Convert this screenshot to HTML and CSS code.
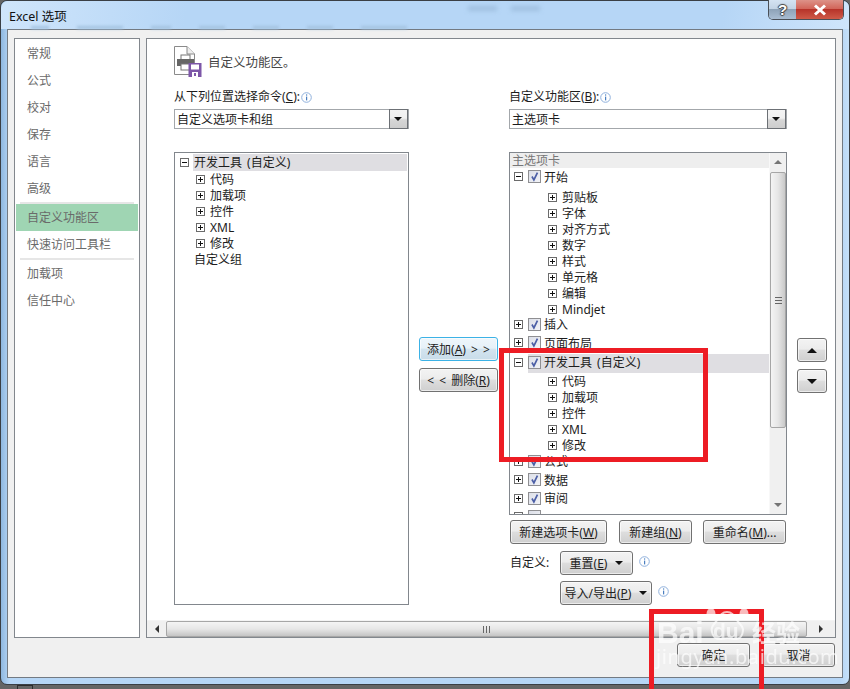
FILE: index.html
```html
<!DOCTYPE html>
<html lang="zh-CN">
<head>
    <meta charset="UTF-8">
    <title>Excel 选项</title>
    <link rel="stylesheet" href="styles.css">
</head>
<body>
<svg class="defs" width="0" height="0">
    <symbol id="info" viewBox="0 0 11 11">
        <circle cx="5.5" cy="5.5" r="4.8" fill="#fff" stroke="#8fb0dc"/>
        <rect x="5" y="2.4" width="1.2" height="1.2" fill="#4a7fc0"/>
        <rect x="5" y="4.6" width="1.2" height="3.8" fill="#4a7fc0"/>
    </symbol>
    <symbol id="tick" viewBox="0 0 13 13">
        <path d="M3.5 6.5 L5.8 10.5 L10 2" fill="none" stroke="#4c5fa6" stroke-width="2"/>
    </symbol>
</svg>

<div class="window">
    <div class="titlebar">
        <span class="title">Excel 选项</span>
        <div class="ghosts">
            <i></i><i class="g2"></i><i class="g3"></i><i class="g4"></i><i class="g4"></i><i class="g4"></i><i class="g2"></i>
        </div>
        <div class="ghosts-top"><i></i><i></i></div>
        <div class="caption">
            <span class="cap-help">?</span>
            <span class="cap-close">
                <svg width="14" height="12" viewBox="0 0 14 12"><path d="M2 1.5 L12 10.5 M12 1.5 L2 10.5" stroke="#fff" stroke-width="3"/></svg>
            </span>
        </div>
    </div>

    <div class="client">
        <div class="panels">
            <div class="nav">
                <div class="nav-item">常规</div>
                <div class="nav-item">公式</div>
                <div class="nav-item">校对</div>
                <div class="nav-item">保存</div>
                <div class="nav-item">语言</div>
                <div class="nav-item">高级</div>
                <div class="nav-sep"></div>
                <div class="nav-item selected">自定义功能区</div>
                <div class="nav-item">快速访问工具栏</div>
                <div class="nav-sep"></div>
                <div class="nav-item">加载项</div>
                <div class="nav-item">信任中心</div>
            </div>

            <div class="main">
                <div class="heading">
                    <svg width="30" height="31" viewBox="0 0 30 31">
                        <path d="M0.5 0.5 H13 L20.5 8 V28.5 H0.5 Z" fill="#fff" stroke="#8a8a8a"/>
                        <path d="M13 0.5 V8 H20.5" fill="#eee" stroke="#8a8a8a"/>
                        <rect x="7" y="9" width="9" height="5" fill="#fff" stroke="#777"/>
                        <rect x="3" y="13" width="17" height="7" fill="#666"/>
                        <rect x="7" y="18" width="9" height="6" fill="#fff" stroke="#777"/>
                        <rect x="14.5" y="17" width="13" height="14" fill="#7d57a8"/>
                        <rect x="17" y="18.5" width="8" height="5" fill="#fff"/>
                        <rect x="18" y="26" width="6" height="5" fill="#fff"/>
                        <rect x="20" y="27" width="2" height="3" fill="#7d57a8"/>
                    </svg>
                    <span>自定义功能区。</span>
                </div>

                <div class="columns">
                    <div class="col">
                        <div class="label"><span>从下列位置选择命令(<u>C</u>):</span><svg class="info"><use href="#info"/></svg></div>
                        <div class="select"><span>自定义选项卡和组</span><b class="drop"></b></div>
                        <div class="list list-left">
                            <div class="tree">
                                <div class="row row-first"><b class="exp open"></b><span class="hl">开发工具 (自定义)</span></div>
                                <div class="row child"><b class="exp"></b><span>代码</span></div>
                                <div class="row child"><b class="exp"></b><span>加载项</span></div>
                                <div class="row child"><b class="exp"></b><span>控件</span></div>
                                <div class="row child"><b class="exp"></b><span>XML</span></div>
                                <div class="row child"><b class="exp"></b><span>修改</span></div>
                                <div class="row plain">自定义组</div>
                            </div>
                        </div>
                    </div>

                    <div class="col-mid">
                        <button class="btn btn-default"><span>添加(<u>A</u>) &gt; &gt;</span></button>
                        <button class="btn"><span>&lt; &lt; 删除(<u>R</u>)</span></button>
                    </div>

                    <div class="col">
                        <div class="label"><span>自定义功能区(<u>B</u>):</span><svg class="info"><use href="#info"/></svg></div>
                        <div class="select"><span>主选项卡</span><b class="drop"></b></div>
                        <div class="list list-right">
                            <div class="ribbon">
                                <div class="ribbon-head">主选项卡</div>
                                <div class="top top-start"><b class="exp open"></b><span class="chk"><svg><use href="#tick"/></svg></span><span>开始</span></div>
                                <div class="group group-start">
                                    <div class="row sub"><b class="exp"></b><span>剪贴板</span></div>
                                    <div class="row sub"><b class="exp"></b><span>字体</span></div>
                                    <div class="row sub"><b class="exp"></b><span>对齐方式</span></div>
                                    <div class="row sub"><b class="exp"></b><span>数字</span></div>
                                    <div class="row sub"><b class="exp"></b><span>样式</span></div>
                                    <div class="row sub"><b class="exp"></b><span>单元格</span></div>
                                    <div class="row sub"><b class="exp"></b><span>编辑</span></div>
                                    <div class="row sub"><b class="exp"></b><span>Mindjet</span></div>
                                </div>
                                <div class="top"><b class="exp"></b><span class="chk"><svg><use href="#tick"/></svg></span><span>插入</span></div>
                                <div class="top"><b class="exp"></b><span class="chk"><svg><use href="#tick"/></svg></span><span>页面布局</span></div>
                                <div class="top top-dev"><b class="exp open"></b><span class="hl-dev"><span class="chk"><svg><use href="#tick"/></svg></span><span>开发工具 (自定义)</span></span></div>
                                <div class="group group-dev">
                                    <div class="row sub"><b class="exp"></b><span>代码</span></div>
                                    <div class="row sub"><b class="exp"></b><span>加载项</span></div>
                                    <div class="row sub"><b class="exp"></b><span>控件</span></div>
                                    <div class="row sub"><b class="exp"></b><span>XML</span></div>
                                    <div class="row sub"><b class="exp"></b><span>修改</span></div>
                                </div>
                                <div class="top"><b class="exp"></b><span class="chk"><svg><use href="#tick"/></svg></span><span>公式</span></div>
                                <div class="top"><b class="exp"></b><span class="chk"><svg><use href="#tick"/></svg></span><span>数据</span></div>
                                <div class="top"><b class="exp"></b><span class="chk"><svg><use href="#tick"/></svg></span><span>审阅</span></div>
                                <div class="top"><b class="exp"></b><span class="chk"></span></div>
                            </div>
                            <div class="vscroll">
                                <div class="arrow-box"><b class="tri-up small"></b></div>
                                <div class="vthumb"><i></i></div>
                                <div class="arrow-box end"><b class="tri-down small"></b></div>
                            </div>
                        </div>
                        <div class="btn-row">
                            <button class="btn w-tab"><span>新建选项卡(<u>W</u>)</span></button>
                            <button class="btn w-group"><span>新建组(<u>N</u>)</span></button>
                            <button class="btn w-rename"><span>重命名(<u>M</u>)...</span></button>
                        </div>
                        <div class="custom-row">
                            <span class="custom-label">自定义:</span>
                            <button class="btn w-reset"><span>重置(<u>E</u>)</span><b class="tri-down"></b></button>
                            <svg class="info"><use href="#info"/></svg>
                        </div>
                        <div class="custom-row second">
                            <button class="btn w-import"><span>导入/导出(<u>P</u>)</span><b class="tri-down"></b></button>
                            <svg class="info"><use href="#info"/></svg>
                        </div>
                    </div>

                    <div class="col-move">
                        <button class="btn btn-move"><b class="tri-up"></b></button>
                        <button class="btn btn-move"><b class="tri-down"></b></button>
                    </div>
                </div>

                <div class="hscroll">
                    <div class="harrow"><b class="tri-left"></b></div>
                    <div class="hthumb"><i></i></div>
                    <div class="harrow"><b class="tri-right"></b></div>
                </div>
            </div>
        </div>

        <div class="footer">
            <button class="btn btn-foot">确定</button>
            <button class="btn btn-foot">取消</button>
        </div>
    </div>
</div>

<!-- bit of the sheet behind the dialog -->
<div class="behind"></div>

<!-- annotations drawn on top of the screenshot -->
<div class="mark mark-tree"></div>
<div class="mark mark-ok"></div>

<div class="watermark">
    <svg class="paw" width="46" height="44" viewBox="0 0 46 44">
        <ellipse cx="7" cy="17" rx="4.5" ry="6"/>
        <ellipse cx="17" cy="6" rx="4.5" ry="6"/>
        <ellipse cx="30" cy="6" rx="4.5" ry="6"/>
        <ellipse cx="40" cy="17" rx="4.5" ry="6"/>
        <path class="paw-body" d="M23 15 C16 15 15 22 10 27 C5 33 9 43 17 42 C21 41 26 41 30 42 C38 43 42 33 36 27 C31 22 30 15 23 15 Z"/>
    </svg>
    <span class="wm-bai">Bai</span>
    <span class="wm-du">du</span>
    <span class="wm-jy">经验</span>
    <span class="wm-url">jingyan.baidu.com</span>
</div>
</body>
</html>
```

FILE: styles.css
```css
* {
    box-sizing: border-box;
}
html, body {
    margin: 0;
    height: 689px;
    overflow: hidden;
}
body {
    background: #656565;
    font-family: "Noto Sans", "Noto Sans CJK SC", sans-serif;
    font-size: 12px;
    color: #1c1c1c;
    position: relative;
}
.defs {
    position: absolute;
}
svg {
    display: block;
}
b, i {
    display: block;
}

/* window frame */
.window {
    width: 850px;
    height: 685px;
    border: 1px solid #3a3f45;
    border-radius: 7px;
    background: linear-gradient(90deg, #8fb8e0 0, #b6d6f6 1%, #b6d6f6 99%, #c6e0f8 100%);
    padding: 0 6px 6px 6px;
    display: flex;
    flex-direction: column;
}
.titlebar {
    height: 28px;
    margin: 0 -6px;
    padding-left: 8px;
    display: flex;
    align-items: center;
    position: relative;
    background: linear-gradient(100deg, #cfe5fb 0, #b6d6f6 22%, #b6d6f6 85%, #cfe5fb 100%);
    border-radius: 7px 7px 0 0;
}
.title {
    font-size: 12.5px;
    color: #111;
}
.ghosts {
    position: absolute;
    left: 30px;
    top: 25px;
    display: flex;
    gap: 28px;
    filter: blur(1.5px);
}
.ghosts i {
    width: 18px;
    height: 3px;
    background: #a3c2df;
}
.ghosts .g2 {
    width: 46px;
}
.ghosts .g3 {
    width: 20px;
}
.ghosts .g4 {
    width: 26px;
}
.ghosts-top {
    position: absolute;
    left: 467px;
    top: 5px;
    display: flex;
    gap: 14px;
    filter: blur(2px);
}
.ghosts-top i {
    width: 29px;
    height: 5px;
    background: #a0c0e0;
}
.caption {
    position: absolute;
    right: 5px;
    top: -1px;
    height: 20px;
    display: flex;
    border: 1px solid #4a5058;
    border-top: 0;
    border-radius: 0 0 5px 5px;
    overflow: hidden;
}
.cap-help {
    width: 27px;
    background: linear-gradient(#d4e3f2 0, #c3d4e5 45%, #8ea3b8 50%, #a9bdd2 100%);
    color: #fff;
    font: 700 15px/19px "Liberation Sans", sans-serif;
    text-align: center;
    text-shadow: 1px 0 1px #444, -1px 0 1px #444, 0 1px 1px #444, 0 -1px 1px #444;
}
.cap-close {
    width: 47px;
    background: linear-gradient(#dd9288 0, #d2665a 45%, #b7342a 50%, #cf5a48 100%);
    display: flex;
    align-items: center;
    justify-content: center;
}

.client {
    flex: 1;
    background: #f0f0f0;
    border: 1px solid #737a82;
    padding: 8px 6px 0 6px;
}
.panels {
    display: flex;
    gap: 6px;
    height: 600px;
}

/* left navigation */
.nav {
    width: 126px;
    background: #fff;
    border: 1px solid #82878d;
    padding: 1px;
    color: #6a6a6a;
}
.nav-item {
    height: 27px;
    line-height: 27px;
    padding-left: 11px;
}
.nav-item.selected {
    background: #9fd5b3;
}
.nav-sep {
    height: 2px;
    margin: 0 4px;
    background: #e6e6e6;
}

/* main panel */
.main {
    flex: 1;
    background: #fff;
    border: 1px solid #82878d;
    display: flex;
    flex-direction: column;
}
.heading {
    height: 50px;
    padding: 7px 0 0 27px;
    display: flex;
    gap: 4px;
    align-items: flex-start;
    color: #444;
}
.heading span {
    margin-top: 6px;
    font-size: 12.5px;
}
.columns {
    display: flex;
    gap: 10px;
    padding-left: 27px;
    height: 531px;
}
.col {
    flex: none;
}
.col:first-child {
    width: 235px;
}
.col-mid {
    width: 80px;
    padding-top: 248px;
    display: flex;
    flex-direction: column;
    gap: 7px;
}
.col:nth-child(3) {
    width: 278px;
}
.col-move {
    width: 30px;
    padding-top: 249px;
    display: flex;
    flex-direction: column;
    gap: 7px;
}
.label {
    height: 16px;
    margin-bottom: 4px;
    display: flex;
    align-items: center;
    gap: 1px;
    line-height: 16px;
}
.info {
    width: 11px;
    height: 11px;
    flex: none;
}
.select {
    height: 20px;
    border: 1px solid #a3a7ab;
    display: flex;
    justify-content: space-between;
    align-items: center;
    padding-left: 2px;
}
.drop {
    width: 19px;
    height: 20px;
    margin: -1px 0;
    border: 1px solid #6c7075;
    background: linear-gradient(#f4f4f4, #f0f0f0 45%, #d6d6d6 55%, #cdcdcd);
    position: relative;
}
.drop::after {
    content: "";
    position: absolute;
    left: 4px;
    top: 7px;
    border: 4px solid transparent;
    border-top: 4px solid #111;
    border-bottom: 0;
}

/* lists */
.list {
    margin-top: 23px;
    background: #fff;
    border: 1px solid #82878d;
}
.list-left {
    height: 453px;
}
.list-right {
    height: 363px;
    display: flex;
    overflow: hidden;
}
.tree {
    padding: 0 1px;
}
.row {
    height: 16px;
    display: flex;
    align-items: center;
}
.row-first {
    height: 18px;
    padding-left: 4px;
}
.hl {
    flex: 1;
    margin-left: 4px;
    padding-left: 1px;
    line-height: 17px;
    background: #dfdee2;
    height: 17px;
    word-spacing: 2px;
}
.child {
    padding-left: 20px;
}
.child span, .sub span {
    margin-left: 5px;
}
.plain {
    padding-left: 18px;
}
.exp {
    width: 9px;
    height: 9px;
    flex: none;
    border: 1px solid #6b6b6b;
    position: relative;
    background: #fff;
}
.exp::before {
    content: "";
    position: absolute;
    left: 1px;
    top: 3px;
    width: 5px;
    height: 1px;
    background: #111;
}
.exp::after {
    content: "";
    position: absolute;
    left: 3px;
    top: 1px;
    width: 1px;
    height: 5px;
    background: #111;
}
.exp.open::after {
    display: none;
}
.ribbon {
    flex: 1;
    min-width: 0;
}
.ribbon-head {
    height: 15px;
    line-height: 15px;
    padding-left: 2px;
    background: #eeeeee;
    color: #777;
}
.top {
    height: 18.5px;
    display: flex;
    align-items: center;
    padding-left: 4px;
}
.top-start {
    margin-top: -1px;
    height: 19px;
}
.top-dev {
    margin-top: 2px;
    height: 19px;
}
.chk {
    width: 13px;
    height: 13px;
    flex: none;
    margin: 0 3px 0 5px;
    border: 1px solid #8f8f92;
    background: linear-gradient(135deg, #dcdfe8, #f2f3f7);
}
.chk svg {
    width: 11px;
    height: 11px;
}
.hl-dev {
    flex: 1;
    height: 19px;
    padding-bottom: 3px;
    display: flex;
    align-items: center;
    background: #dfdee2;
    word-spacing: 2px;
}
.hl-dev .chk {
    margin-left: 0;
}
.top-dev .exp {
    margin: -3px 5px 0 0;
}
.group-start {
    margin: 3px 0 -2px;
}
.group-dev {
    margin-bottom: -1px;
}
.sub {
    padding-left: 38px;
}
.vscroll {
    width: 17px;
    flex: none;
    background: #f0f0f0;
    display: flex;
    flex-direction: column;
    position: relative;
    border-left: 1px solid #f8f8f8;
}
.arrow-box {
    height: 18px;
    display: flex;
    align-items: center;
    justify-content: center;
}
.arrow-box.end {
    margin-top: auto;
}
.vthumb {
    height: 256px;
    margin: 1px 0 0;
    border: 1px solid #a6a6a6;
    border-radius: 2px;
    background: linear-gradient(90deg, #f4f4f4, #e6e6e6 50%, #c9c9c9);
    display: flex;
    align-items: center;
    justify-content: center;
}
.vthumb i {
    width: 7px;
    height: 7px;
    background: repeating-linear-gradient(#666 0 1px, transparent 1px 3px);
}

/* triangles */
.tri-up, .tri-down, .tri-left, .tri-right {
    width: 0;
    height: 0;
    border: 5px solid transparent;
    flex: none;
}
.tri-up {
    border-top: 0;
    border-bottom-color: #111;
}
.tri-down {
    border-bottom: 0;
    border-top-color: #111;
}
.tri-left {
    border-width: 4px;
    border-left: 0;
    border-right-color: #333;
}
.tri-right {
    border-width: 4px;
    border-right: 0;
    border-left-color: #333;
}
.small {
    border-width: 4px;
    opacity: .55;
}
.tri-up.small {
    border-top: 0;
}
.tri-down.small {
    border-bottom: 0;
}

/* buttons */
.btn {
    height: 24px;
    padding: 0;
    border: 1px solid #717171;
    border-radius: 3px;
    font: inherit;
    color: #222;
    background: linear-gradient(#f3f3f3, #ececec 45%, #dddddd 52%, #cfcfcf);
    box-shadow: inset 0 0 0 1px rgba(255, 255, 255, .6);
    display: flex;
    align-items: center;
    justify-content: center;
    flex: none;
    white-space: nowrap;
}
.btn-default {
    border-color: #3cb2e6;
    background: linear-gradient(#eef6fb, #e6f1f8 45%, #d3e4ef 52%, #c8dce9);
}
.col-mid .btn {
    width: 79px;
    word-spacing: 2px;
}
.btn-move {
    width: 30px;
    height: 24px;
}
.btn-row {
    display: flex;
    margin: 5px 0 0 1px;
}
.w-tab {
    width: 97px;
}
.w-group {
    width: 73px;
    margin-left: 12px;
}
.w-rename {
    width: 83px;
    margin-left: 11px;
}
.custom-row {
    display: flex;
    align-items: flex-start;
    margin-top: 7px;
    padding-left: 1px;
    gap: 2px;
}
.custom-row.second {
    margin-top: 6px;
    padding-left: 51px;
}
.custom-row .info {
    margin: 5px 0 0 4px;
}
.custom-label {
    width: 48px;
    line-height: 23px;
}
.custom-row .btn {
    gap: 8px;
}
.w-reset {
    width: 73px;
}
.w-import {
    width: 92px;
}
.custom-row .tri-down {
    border-width: 4px;
    border-bottom: 0;
}

/* horizontal scrollbar */
.hscroll {
    height: 17px;
    margin-top: auto;
    display: flex;
    background: #f0f0f0;
    border-top: 1px solid #f4f4f4;
}
.harrow {
    width: 19px;
    flex: none;
    display: flex;
    align-items: center;
    justify-content: center;
}
.hthumb {
    width: 641px;
    border: 1px solid #a6a6a6;
    border-radius: 2px;
    background: linear-gradient(#f4f4f4, #e6e6e6 50%, #c4c4c4);
    display: flex;
    align-items: center;
    justify-content: center;
}
.hthumb i {
    width: 7px;
    height: 7px;
    background: repeating-linear-gradient(90deg, #666 0 1px, transparent 1px 3px);
}
.harrow:last-child {
    flex: 1;
}

.footer {
    display: flex;
    justify-content: flex-end;
    gap: 12px;
    padding: 5px 1px 0 0;
}
.btn-foot {
    width: 73px;
    height: 24px;
}

.behind {
    position: absolute;
    left: 17px;
    top: 685px;
    width: 16px;
    height: 4px;
    border: 1px solid #2c2c2c;
    border-bottom: 0;
}

/* red annotation boxes */
.mark {
    position: absolute;
    border: 5px solid #ed1c24;
}
.mark-tree {
    left: 499px;
    top: 348px;
    width: 209px;
    height: 114px;
}
.mark-ok {
    left: 649px;
    top: 609px;
    width: 115px;
    height: 100px;
}

/* watermark */
.watermark {
    position: absolute;
    left: 0;
    top: 0;
    width: 850px;
    height: 689px;
    color: #fff;
    opacity: .7;
    pointer-events: none;
}
.watermark span {
    position: absolute;
    line-height: 1;
}
.paw {
    position: absolute;
    left: 704px;
    top: 597px;
    fill: #fff;
}
.paw-body {
    fill: none;
    stroke: #fff;
    stroke-width: 2;
}
.wm-bai {
    left: 657px;
    top: 618px;
    font: 700 30px "Liberation Sans", sans-serif;
}
.wm-du {
    left: 713px;
    top: 620px;
    font: 700 21px "Liberation Sans", sans-serif;
}
.wm-jy {
    left: 752px;
    top: 620px;
    font: 700 24px "Noto Sans CJK SC", sans-serif;
}
.wm-url {
    left: 656px;
    top: 647px;
    font: 400 20px "Noto Sans", sans-serif;
    letter-spacing: .6px;
}
```
